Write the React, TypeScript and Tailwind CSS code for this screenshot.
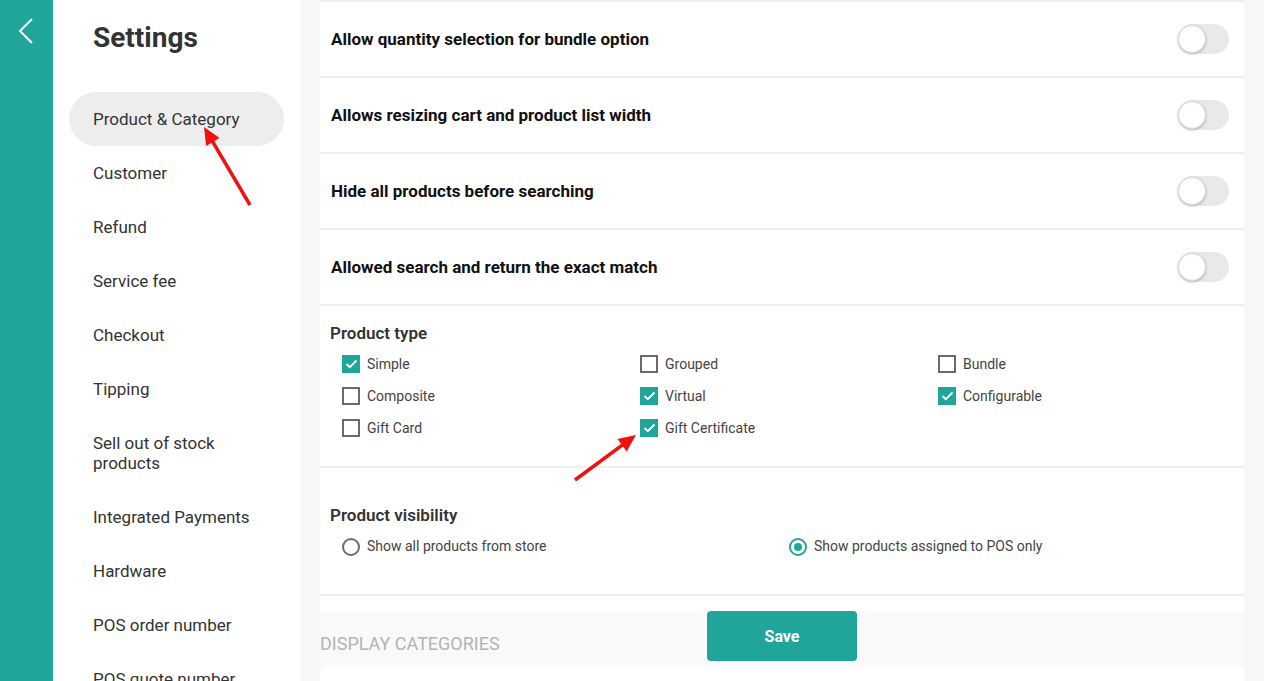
import React from "react";

const menu = [
  "Product & Category",
  "Customer",
  "Refund",
  "Service fee",
  "Checkout",
  "Tipping",
  "Sell out of stock products",
  "Integrated Payments",
  "Hardware",
  "POS order number",
  "POS quote number",
];

const toggles = [
  "Allow quantity selection for bundle option",
  "Allows resizing cart and product list width",
  "Hide all products before searching",
  "Allowed search and return the exact match",
];

const types: [string, boolean][] = [
  ["Simple", true],
  ["Grouped", false],
  ["Bundle", false],
  ["Composite", false],
  ["Virtual", true],
  ["Configurable", true],
  ["Gift Card", false],
  ["Gift Certificate", true],
];

function Toggle() {
  return (
    <div className="relative w-[51px] h-[30px] rounded-full bg-[#e9e9e9]">
      <div className="absolute left-0 top-px w-[28px] h-[28px] rounded-full bg-white border border-[#dcdcdc] shadow-[0_1px_3px_rgba(0,0,0,0.25)]" />
    </div>
  );
}

function Checkbox({ checked }: { checked: boolean }) {
  if (checked) {
    return (
      <div className="w-[18px] h-[18px] bg-[#1fa59a] flex items-center justify-center">
        <svg width="13" height="10" viewBox="0 0 13 10" fill="none">
          <path d="M1.5 5l3.3 3.2L11.5 1.5" stroke="white" strokeWidth="2" />
        </svg>
      </div>
    );
  }
  return <div className="w-[18px] h-[18px] border-2 border-[#6b6b6b]" />;
}

function Radio({ checked }: { checked: boolean }) {
  return (
    <div
      className={
        checked
          ? "w-[18px] h-[18px] rounded-full border-2 border-[#1fa59a] flex items-center justify-center"
          : "w-[18px] h-[18px] rounded-full border-2 border-[#6b6b6b]"
      }
    >
      {checked && <div className="w-[8px] h-[8px] rounded-full bg-[#1fa59a]" />}
    </div>
  );
}

function Arrow({ x1, y1, x2, y2 }: { x1: number; y1: number; x2: number; y2: number }) {
  const a = Math.atan2(y2 - y1, x2 - x1);
  const l = 19;
  const w = 0.42;
  const p1 = [x2 - l * Math.cos(a - w), y2 - l * Math.sin(a - w)];
  const p2 = [x2 - l * Math.cos(a + w), y2 - l * Math.sin(a + w)];
  return (
    <g>
      <line x1={x1} y1={y1} x2={x2 - 10 * Math.cos(a)} y2={y2 - 10 * Math.sin(a)} stroke="#f01010" strokeWidth="3.5" />
      <polygon points={`${x2},${y2} ${p1[0]},${p1[1]} ${p2[0]},${p2[1]}`} fill="#f01010" />
    </g>
  );
}

export default function App() {
  return (
    <div className="relative w-[1264px] h-[681px] overflow-hidden flex font-['Roboto',sans-serif] text-[#333]">
      {/* teal rail */}
      <div className="w-[53px] shrink-0 bg-[#1fa59a] flex justify-center pt-[18px]">
        <svg width="16" height="26" viewBox="0 0 16 26" fill="none" className="-ml-[2px]">
          <path d="M14 1L2 13l12 12" stroke="white" strokeWidth="2" />
        </svg>
      </div>

      {/* sidebar */}
      <div className="w-[247px] shrink-0 bg-white px-4">
        <h1 className="pl-6 pt-[21px] text-[28px] font-bold leading-[34px] text-[#333]">Settings</h1>
        <ul className="mt-[37px]">
          {menu.map((m, i) => (
            <li
              key={m}
              className={
                i === 0
                  ? "pl-6 pr-4 py-[17px] text-[17px] leading-[20px] rounded-full bg-[#ededed]"
                  : "pl-6 pr-8 py-[17px] text-[17px] leading-[20px]"
              }
            >
              {m}
            </li>
          ))}
        </ul>
      </div>

      {/* main */}
      <div className="relative flex-1 bg-[#f7f7f7] px-5">
        <div className="bg-white border-t-2 border-[#efefef]">
          {toggles.map((t) => (
            <div key={t} className="h-[76px] flex items-center justify-between pl-[11px] pr-[15px] border-b-2 border-[#efefef]">
              <span className="text-[17px] font-bold text-[#111] pt-px">{t}</span>
              <Toggle />
            </div>
          ))}

          <div className="h-[162px] pl-[10px] pt-[17px] border-b-2 border-[#efefef]">
            <div className="text-[17px] font-semibold text-[#333] leading-[20px]">Product type</div>
            <div className="grid grid-cols-[298px_298px_1fr] pl-[12px] mt-[5px]">
              {types.map(([n, c]) => (
                <div key={n} className="h-[32px] flex items-center gap-[7px]">
                  <Checkbox checked={c} />
                  <span className="text-[14px] text-[#444]">{n}</span>
                </div>
              ))}
            </div>
          </div>

          <div className="h-[128px] pl-[10px] pt-[37px] border-b-2 border-[#efefef]">
            <div className="text-[17px] font-semibold text-[#333] leading-[20px]">Product visibility</div>
            <div className="flex pl-[12px] mt-[11px]">
              <div className="w-[447px] flex items-center gap-[7px]">
                <Radio checked={false} />
                <span className="text-[14px] text-[#444]">Show all products from store</span>
              </div>
              <div className="flex items-center gap-[7px]">
                <Radio checked />
                <span className="text-[14px] text-[#444]">Show products assigned to POS only</span>
              </div>
            </div>
          </div>
          <div className="h-[16px]" />
        </div>

        <div className="h-[53px] bg-[#f9f9f9] flex items-center">
          <span className="text-[18px] uppercase text-[#b3b3b3] pt-[9px]">Display Categories</span>
        </div>
        <div className="h-[40px] bg-white rounded-t-md" />

        {/* save button */}
        <div className="absolute left-0 right-0 top-[611px] flex justify-center">
          <button className="w-[150px] h-[50px] pt-px rounded-[4px] bg-[#1fa59a] text-white font-bold text-[16px]">Save</button>
        </div>
      </div>

      {/* annotation arrows */}
      <svg className="absolute inset-0 pointer-events-none" width="1264" height="681">
        <Arrow x1={250} y1={205} x2={204} y2={127} />
        <Arrow x1={575} y1={480} x2={636} y2={435} />
      </svg>
    </div>
  );
}
